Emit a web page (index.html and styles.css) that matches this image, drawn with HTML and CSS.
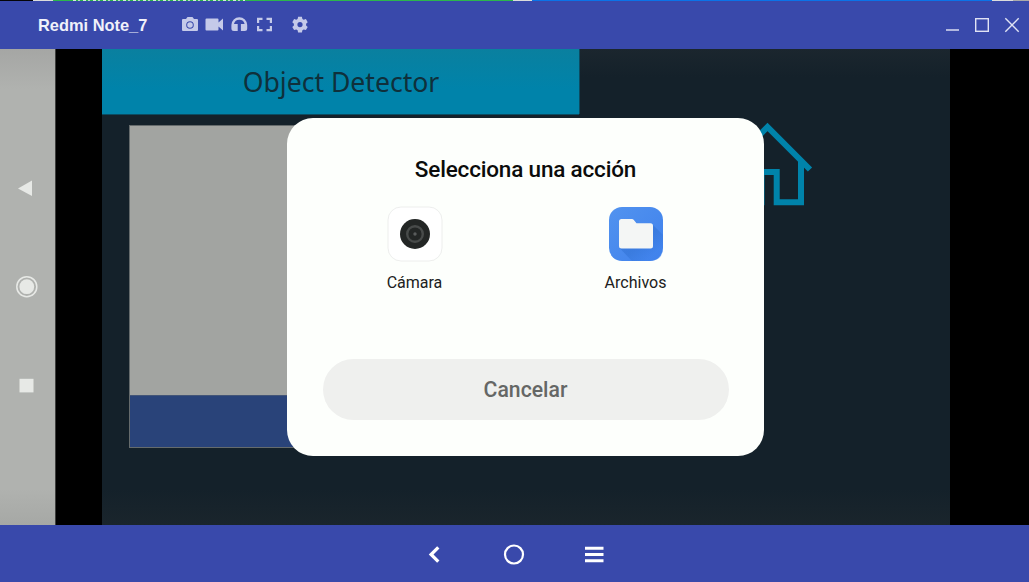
FILE: index.html
```html
<!DOCTYPE html>
<html lang="es">
<head>
<meta charset="utf-8">
<title>Redmi Note_7</title>
<link rel="stylesheet" href="styles.css">
</head>
<body>
<div class="window">
  <div class="edge"><span class="edge-marks"></span></div>
  <header class="titlebar">
    <h1 class="device">Redmi Note_7</h1>
    <svg class="tools" width="130" height="20" viewBox="180 15 130 20">
      <path fill-rule="evenodd" d="M183 19h3l1.500-2h5l1.500 2h3q1 0 1 1v10q0 1-1 1h-14q-1 0-1-1V20q0-1 1-1zM190 21.200a3.800 3.800 0 1 0 0 7.600 3.800 3.800 0 0 0 0-7.600zM190 22.200a2.800 2.800 0 1 1 0 5.600 2.800 2.800 0 0 1 0-5.600z"/>
      <path d="M206.500 18.500h11q1 0 1 1v3l4.500-4v12l-4.500-4v3q0 1-1 1h-11q-1 0-1-1v-10q0-1 1-1z"/>
      <path d="M239.300 17.300a7.900 7.900 0 0 0-7.900 7.800v3.500a2.500 2.500 0 0 0 2.500 2.500h3.800v-7h-3.700a5.400 5.400 0 0 1 10.600 0h-3.700v7h3.800a2.500 2.500 0 0 0 2.500-2.500v-3.500a7.900 7.900 0 0 0-7.900-7.800z"/>
      <path d="M257 17.700h5.500v2.200h-3.300v3H257zM266.500 17.700h5.500v5.200h-2.200v-3h-3.300zM257 26h2.200v3h3.300v2.200H257zM269.800 26h2.200v5.200h-5.500V29h3.300z"/>
      <path fill-rule="evenodd" d="M298.100 16.800h3.800l.5 2.200 1.300.8 2.200-.7 1.800 3.200-1.600 1.400v1.800l1.600 1.400-1.800 3.200-2.200-.7-1.300.8-.5 2.200h-3.800l-.5-2.200-1.300-.8-2.200.7-1.800-3.200 1.600-1.400v-1.800l-1.600-1.400 1.800-3.200 2.200.7 1.300-.8zM300 22a2.600 2.600 0 1 0 0 5.200 2.600 2.600 0 0 0 0-5.200z"/>
    </svg>
    <svg class="controls" width="80" height="20" viewBox="942 15 80 20">
      <path class="dim" d="M946 30h13"/>
      <rect x="975.700" y="18.700" width="12.600" height="12.600"/>
      <path d="M1005.300 18.300l13.400 13.400M1018.700 18.300l-13.400 13.400"/>
    </svg>
  </header>

  <main class="screen">
    <aside class="phone-nav">
      <svg width="55" height="476" viewBox="0 49 55 476">
        <path d="M18 188.500L32 180.500v15.500z"/>
        <circle class="ring" cx="26.800" cy="286.700" r="10"/>
        <circle cx="26.800" cy="286.700" r="7.400"/>
        <rect x="19.500" y="378.800" width="14" height="13.600"/>
      </svg>
    </aside>
    <section class="app">
      <div class="app-left">
        <h2 class="app-title">Object Detector</h2>
        <div class="preview"><div class="preview-bar"></div></div>
      </div>
      <svg class="house" width="92" height="84" viewBox="722 122 92 84">
        <path d="M725 169.500L767.500 127L810 169.500M734.500 161v41.300h27V172h15.200v30.300H801V160"/>
      </svg>
    </section>
    <div class="dialog">
      <h2 class="dialog-title">Selecciona una acción</h2>
      <div class="choices">
        <div class="choice">
          <svg width="56" height="56" viewBox="0 0 56 56">
            <rect x="1" y="1" width="54" height="54" rx="13" fill="#fff" stroke="#e9eae9" stroke-width=".8"/>
            <circle cx="28" cy="28" r="15" fill="#232625"/>
            <circle cx="28" cy="28" r="7.800" fill="none" stroke="#484b4a" stroke-width="2.400"/>
            <circle cx="28" cy="28" r="1.700" fill="#5a5d5c"/>
          </svg>
          <span class="label">Cámara</span>
        </div>
        <div class="choice">
          <svg width="56" height="56" viewBox="0 0 56 56">
            <defs>
              <linearGradient id="tile" x2="1" y2="1"><stop stop-color="#5293ef"/><stop offset="1" stop-color="#3f81ec"/></linearGradient>
              <linearGradient id="shade" x1="0" y1="0" x2="1" y2="1"><stop offset=".5" stop-color="#2869ca"/><stop offset=".8" stop-color="#4083ec"/></linearGradient>
            </defs>
            <rect x="1" y="1" width="54" height="54" rx="13" fill="url(#tile)"/>
            <path d="M44.500 18.500L55 29v13q0 13-13 13H24L12 42.500z" fill="url(#shade)" opacity=".4"/>
            <path d="M13.500 13h10.500q1 0 1.600.8L28.500 17.300H42.500q2.500 0 2.500 2.500V40q0 2.500-2.500 2.500h-29Q11 42.500 11 40V15.500Q11 13 13.500 13z" fill="#f4f6f5"/>
          </svg>
          <span class="label">Archivos</span>
        </div>
      </div>
      <button class="cancel">Cancelar</button>
    </div>
  </main>

  <footer class="bottom">
    <svg width="180" height="24" viewBox="424 542 180 24">
      <path class="back" d="M438.300 547.300L431.100 554.500l7.200 7.200"/>
      <circle cx="514" cy="554.500" r="9"/>
      <path class="menu" d="M585 548.300h18.500M585 554.500h18.500M585 560.700h18.500"/>
    </svg>
  </footer>
</div>
</body>
</html>
```
FILE: styles.css
```css
* { box-sizing: border-box; }
body { margin: 0; font-family: Roboto, sans-serif; overflow: hidden; }
h1, h2 { margin: 0; }
svg { display: block; flex: none; }

.window {
  width: 1029px;
  height: 582px;
  display: flex;
  flex-direction: column;
  background: #3949ab;
}
.edge {
  height: 1px;
  padding-left: 73px;
  background: linear-gradient(90deg, #050508 33px, #dcdcdc 33px 53px, #2cb64c 53px 513px, #dcdcdc 513px 532px, #0b73e8 532px 992px, #dcdcdc 992px 1013px, #aaa 1013px);
}
.edge-marks {
  display: block;
  width: 172px;
  height: 1px;
  background: repeating-linear-gradient(90deg, #d3edd8 0 3px, #2cb64c 3px 5px, #b5ddbd 5px 7px, #2cb64c 7px 10px);
}

.titlebar {
  height: 48px;
  display: flex;
  align-items: center;
  padding: 0 7px 0 38px;
}
.device {
  width: 142px;
  font: bold 16.400px/20px "Liberation Sans", sans-serif;
  color: #f0f1fa;
  white-space: nowrap;
}
.tools { fill: #c5cae9; }
.controls { margin-left: auto; fill: none; stroke: #e0e3f4; stroke-width: 1.4; }
.controls .dim { stroke: #b1b7df; stroke-width: 2; }

.screen { position: relative; height: 476px; display: flex; background: #000; }
.phone-nav {
  width: 55px;
  background: linear-gradient(#a5a6a4, #b0b2af 40px, #b0b2af 440px, #a6a8a5);
  box-shadow: 1px 0 #3d3e3d;
}
.phone-nav svg { fill: #e7e9e6; }
.phone-nav .ring { fill: none; stroke: #e7e9e6; stroke-width: 1.500; }

.app {
  width: 848px;
  margin-left: 47px;
  display: flex;
  background: linear-gradient(#1b262e, #14212a 28px, #14212a 440px, #1a252c);
}
.app-left { width: 477px; }
.app-title {
  height: 65px;
  padding-left: 1px;
  text-align: center;
  font: 400 26.600px/66px "Noto Sans", sans-serif;
  color: #0f303b;
  background: linear-gradient(#0a809f, #0083aa 40px);
  box-shadow: 0 1px #0b4c62, 1px 0 #0b4c62;
}
.preview {
  width: 424px;
  height: 323px;
  margin: 11px 0 0 27px;
  padding-top: 269px;
  border: 1px solid #656b6c;
  background: #a2a4a1;
}
.preview-bar { height: 52px; background: #294379; border-top: 1px solid #435577; }
.house { margin: 73px 0 0 143px; fill: none; stroke: #0083aa; stroke-width: 6; }

.dialog {
  position: absolute;
  left: 287px;
  top: 69.400px;
  width: 477px;
  height: 337.500px;
  padding: 34px 35.500px 36px;
  display: flex;
  flex-direction: column;
  border-radius: 26px;
  background: #fdfffc;
}
.dialog-title { text-align: center; font-size: 22.500px; letter-spacing: -.18px; line-height: 34px; font-weight: 500; color: #0b0c0b; }
.choices { display: flex; justify-content: space-between; padding: 0 37px 0 36px; margin-top: 20px; }
.choice { width: 112px; display: flex; flex-direction: column; align-items: center; }
.label { margin-top: 10px; font-size: 16px; line-height: 22px; color: #202120; }
.cancel {
  height: 61px;
  margin-top: auto;
  padding: 1px 0 0;
  border: 0;
  border-radius: 31px;
  background: #eff0ee;
  color: #656765;
  font: 500 21.200px Roboto, sans-serif;
}

.bottom { height: 57px; display: flex; justify-content: center; padding: 17px 1px 0 0; }
.bottom svg { fill: none; stroke: #fff; stroke-width: 2.200; }
.bottom .back { stroke-width: 3.300; }
.bottom .menu { stroke-width: 3; }
```
